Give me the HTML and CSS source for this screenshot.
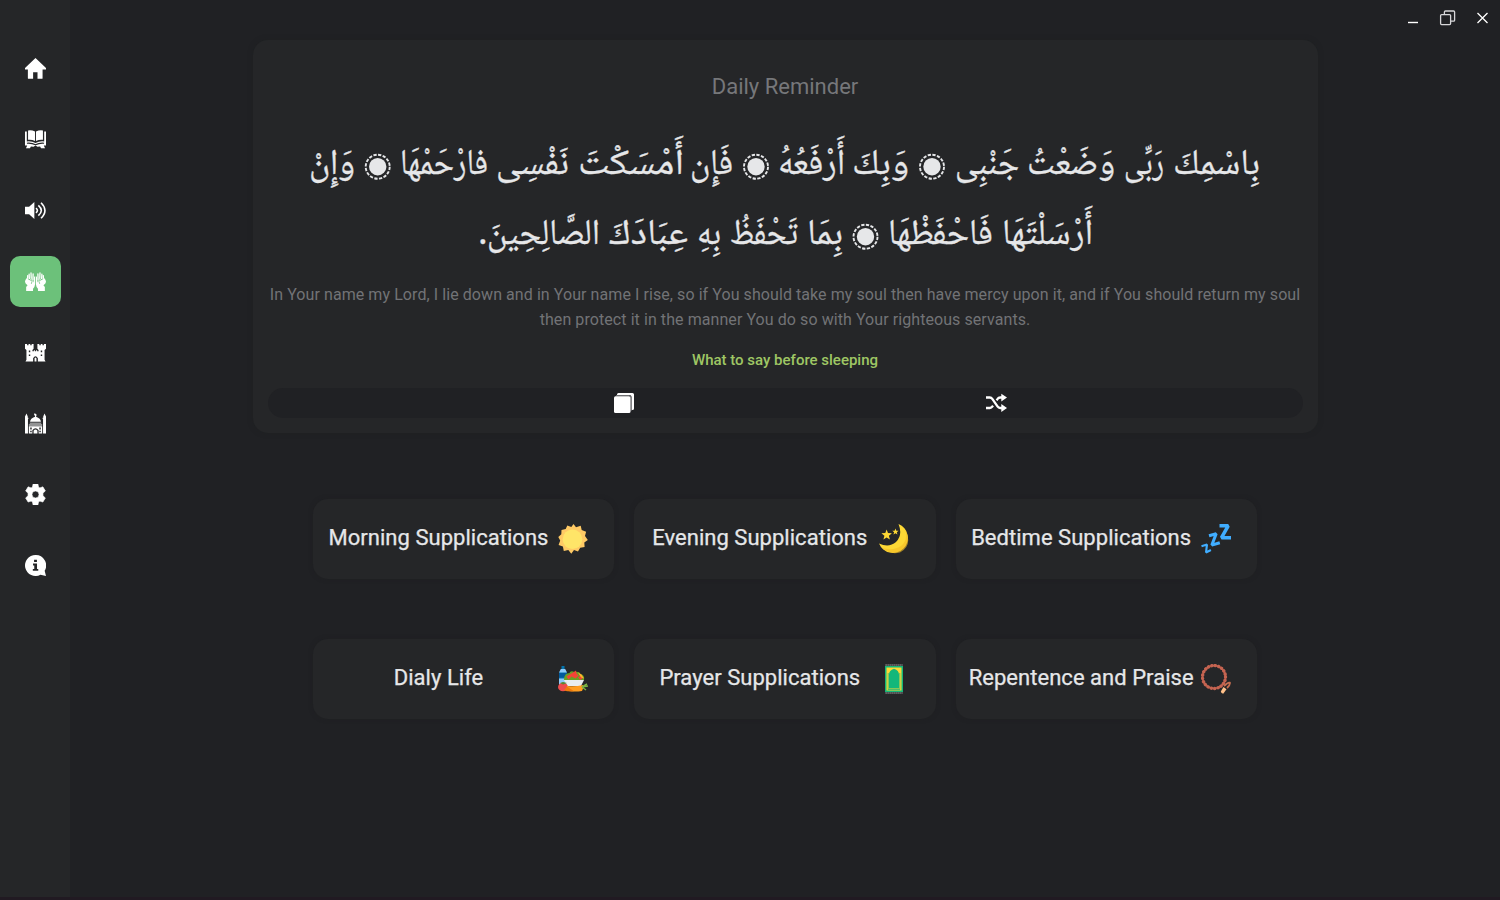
FILE: index.html
```html
<!DOCTYPE html>
<html lang="en">
<head>
<meta charset="utf-8">
<title>Supplications</title>
<link rel="stylesheet" href="styles.css">
</head>
<body>
<div class="app">
  <nav class="sidebar">
    <a class="nav"><svg viewBox="0 0 22 22"><path d="M11 0 0 10.400V12h3v9.200q0 .6.6.6H8.500V15h4.600v6.800h4.700q.6 0 .6-.6V12H22v-1.600z"/></svg></a>
    <a class="nav"><svg viewBox="0 0 22 22"><path d="M3.200 1.500Q7 .8 10.500 2.600V12.500Q7 10.800 3.200 11.300zM18.800 1.500Q15 .8 11.500 2.600v9.900q3.600-1.700 7.300-1.200zM0 2.500h1.900V13q5.100-.6 9.100 1.700 4-2.300 9.100-1.700V2.500H22v14.800h-2.300l1.300 2.900h-4.200l-1-1.800-2.800.2-2-1.400-2 1.400-2.800-.2-1 1.800H1l1.300-2.900H0z"/><path d="M2 14.900q5-.5 9 1.600 4-2.100 9-1.600" fill="none" stroke="#252628" stroke-width="1.200"/></svg></a>
    <a class="nav"><svg viewBox="0 0 22 22"><path d="M0 7h4.300L9.800 2.200V19.800L4.300 15H0z"/><g fill="none" stroke="#fff" stroke-width="1.700"><path d="M11.500 8.600q3 2.400 0 4.800M14 5.600q6.200 5.400 0 10.800M16.800 2.900q8.200 8 0 16.200"/></g></svg></a>
    <a class="nav active"><svg viewBox="0 0 22 22"><g id="hand"><path d="M10.600 5.600V14q-.3 3-2.200 4.500V21H1.200v-4.300l1.500-1.700Q0 13 0 11.200c0-1.500 1.200-2.900 2.500-5 L5 9.500l1.500-2L7.500 9l1.300 3 .7-6z"/><path d="M2.800 8.500V4.800M4.600 7.800 4.300 3.300M6.500 7.500 6.300 2M8.300 9 8.500 3" fill="none" stroke="#fff" stroke-width="1.350" stroke-linecap="round"/><path d="M3 8.200q2.500.6 2.800 2M6.300 8.500q2 2 .3 5" fill="none" stroke="#6cc17a" stroke-width=".8"/></g><use href="#hand" transform="matrix(-1 0 0 1 22 0)"/></svg></a>
    <a class="nav"><svg viewBox="0 0 22 22"><path fill-rule="evenodd" d="M0 2h2.200v1.500h1.500V2h1.800v1.500H7V2h2v5L7.800 8.300v1.500h1.500V8.600h1.100v1.200h1.200V8.600h1.100v1.200h1.500V8.300L13 7V2h2v1.500h1.500V2h1.800v1.500h1.500V2H22v5l-1.500 1.300V18.500L21.500 20.500h-8V17q-2.500-4-5 0v3.500h-8l1-2V8.300L0 7zM4 9v1.700h1.500V9zM4 13v1.700h1.500V13zM16.500 9v1.700H18V9zM16.500 13v1.700H18V13zM10 20.500V17q1-1.500 2 0v3.500z"/></svg></a>
    <a class="nav"><svg viewBox="0 0 22 22"><path d="M1.600.6 2.900 3.600V5h.6v1.200h-.4V21.500H0V6.200-.400V3.600zM20.400.6 19.100 3.600V5h-.6v1.200h.4V21.500H22V3.600zM5.300 9.200Q5.500 5.800 10.500 4V3Q8.500 1.500 10.500 0q.2 1.300 1.500 1.300V3l-.5 1q5 1.800 5.200 5.200zM5 10.100h12v.9H5zM4 12h14v1H4z"/><path fill-rule="evenodd" d="M4 14h14v7.500h-3.700V18q-3.300-4-6.600 0v3.500H4zm1.500 1.300v2H7v-2zm9.500 0v2h1.500v-2zM5.500 18.700v1.500H7v-1.500zm9.500 0v1.500h1.500v-1.500zM9 21.500v-3q2-2.500 4 0v3z"/></svg></a>
    <a class="nav"><svg viewBox="0 0 22 22"><path fill-rule="evenodd" d="M8.500 0h5l.6 3.200 1.500.9L18.700 3l2.600 4.300-2.500 2.200v2.900l2.500 2.200-2.600 4.300-3.100-1-1.500.9-.6 3.200h-5l-.6-3.200-1.500-.9-3.100 1L.7 14.600l2.500-2.200V9.500L.7 7.300 3.300 3l3.100 1.100 1.500-.9zM11 7.300a3.700 3.700 0 1 0 0 7.400 3.700 3.700 0 0 0 0-7.400z" stroke="#fff" stroke-width=".7" stroke-linejoin="round"/></svg></a>
    <a class="nav"><svg viewBox="0 0 22 22"><path fill-rule="evenodd" d="M11 0a11 11 0 1 0 5.200 20.700l5.800 1.300-1.400-5.400A11 11 0 0 0 11 0zM9.500 5h3v2.400h-3zM8.400 9h4.200v5.600h1.300v2H8.200v-2h1.500v-3.600H8.400z"/></svg></a>
  </nav>
  <div class="main">
    <header class="titlebar">
      <svg class="winbuttons" viewBox="0 0 84 20"><path d="M2 13.500h10" stroke="#fff" stroke-width="1.400"/><g fill="none" stroke="#d7d7d9" stroke-width="1.300"><rect x="34.600" y="5.600" width="10" height="10" rx="1"/><path d="M38.400 5V3q0-1 1-1h8.200q1 0 1 1v8.200q0 1-1 1h-3"/></g><path d="m71.500 4 10 10m0-10-10 10" stroke="#fff" stroke-width="1.300"/></svg>
    </header>
    <section class="reminder">
      <h1>Daily Reminder</h1>
      <svg class="arabic" viewBox="0 0 1037 150" lang="ar">
        <defs><g id="mark"><circle r="8.700"/><circle r="12" fill="none" stroke="#e6e7e9" stroke-width="1.900" stroke-dasharray="3.300 1.412"/></g></defs>
        <g class="verse">
          <text x="906" y="54" textLength="87" lengthAdjust="spacingAndGlyphs">بِاسْمِكَ</text>
          <text x="857" y="54" textLength="40" lengthAdjust="spacingAndGlyphs">رَبِّى</text>
          <text x="760" y="54" textLength="88" lengthAdjust="spacingAndGlyphs">وَضَعْتُ</text>
          <text x="688" y="54" textLength="64" lengthAdjust="spacingAndGlyphs">جَنْبِى</text>
          <text x="585" y="54" textLength="57" lengthAdjust="spacingAndGlyphs">وَبِكَ</text>
          <text x="511" y="54" textLength="67" lengthAdjust="spacingAndGlyphs">أَرْفَعُهُ</text>
          <text x="423" y="54" textLength="43" lengthAdjust="spacingAndGlyphs">فَإِن</text>
          <text x="311" y="54" textLength="106" lengthAdjust="spacingAndGlyphs">أَمْسَكْتَ</text>
          <text x="229" y="54" textLength="73" lengthAdjust="spacingAndGlyphs">نَفْسِى</text>
          <text x="133" y="54" textLength="88" lengthAdjust="spacingAndGlyphs">فارْحَمْهَا</text>
          <text x="42" y="54" textLength="46" lengthAdjust="spacingAndGlyphs">وَإِنْ</text>
          <text x="735" y="124" textLength="91" lengthAdjust="spacingAndGlyphs">أَرْسَلْتَهَا</text>
          <text x="621" y="124" textLength="105" lengthAdjust="spacingAndGlyphs">فَاحْفَظْهَا</text>
          <text x="540" y="124" textLength="36" lengthAdjust="spacingAndGlyphs">بِمَا</text>
          <text x="463" y="124" textLength="68" lengthAdjust="spacingAndGlyphs">تَحْفَظُ</text>
          <text x="430" y="124" textLength="24" lengthAdjust="spacingAndGlyphs">بِهِ</text>
          <text x="342" y="124" textLength="79" lengthAdjust="spacingAndGlyphs">عِبَادَكَ</text>
          <text x="220" y="124" textLength="113" lengthAdjust="spacingAndGlyphs">الصَّالِحِينَ</text>
          <text x="211" y="124">.</text>
          <use href="#mark" x="665" y="46.700"/><use href="#mark" x="489" y="46.700"/><use href="#mark" x="110.700" y="46.700"/><use href="#mark" x="598.500" y="116.700"/>
        </g>
      </svg>
      <p class="translation">In Your name my Lord, I lie down and in Your name I rise, so if You should take my soul then have mercy upon it, and if You should return my soul<br>then protect it in the manner You do so with Your righteous servants.</p>
      <p class="topic">What to say before sleeping</p>
      <div class="actions">
        <svg width="20" height="20" viewBox="0 0 20 20"><path d="M3 2V1.500Q3 0 4.500 0H18.500Q20 0 20 1.500V15.500Q20 17 18.500 17H17.500V4Q17.500 2 15.500 2z" fill="#fff"/><path d="M2 2.600h13.500q1.500 0 1.500 1.500V18" fill="none" stroke="#77777a"/><rect y="3.300" width="16.500" height="16.700" rx="1.500" fill="#fff"/></svg>
        <svg width="21" height="20" viewBox="0 0 21 20"><path d="M0 4.500h3.800q1.600 0 2.500 1.300l5.200 7.600q1 1.600 2.700 1.600H16M0 15h3.800q1.600 0 2.500-1.300l.7-1M10.600 7.300l1-1.400q.9-1.400 2.600-1.400H16" fill="none" stroke="#fff" stroke-width="2.300"/><path d="M15.300.8 21 4.600l-5.700 4zM15.300 11l5.700 4-5.700 3.900z" fill="#fff"/></svg>
      </div>
    </section>
    <section class="grid">
      <a class="card"><span>Morning Supplications</span><svg viewBox="0 0 30 30"><path fill="#ffca65" d="m15.500 0 2.500 3.300 4.700-1.500 1 4.200 4.400 1.800-1.100 4.200 2.800 4-3.500 2.500.3 4.500-4.400.8-2.200 3.700-4-1.500-2.700 3.700-3-3.700-4.500 1-.9-4.500-4.300-1.500 1.600-4.500L.3 13l3-2.800L3.500 6l4.200-1 1.600-3.500 4 1.400z"/><circle cx="14.500" cy="15.300" r="9.800" fill="#ffe568"/></svg></a>
      <a class="card"><span>Evening Supplications</span><svg viewBox="0 0 30 30"><path fill="#fdd835" d="M19.500 0A15 15 0 1 1 0 19.500Q10 24 17 18 24 11 19.500 0z"/><path fill="#f4bc24" d="M26.500 6q2.500 11-4.500 16T3 24q8 7 18 4.500 13-7 5.500-22.500z" opacity=".6"/><path fill="#fdd835" d="m7.600 5.500 1.400 3.500 3.900.3-3 2.400 1 3.900-3.300-2.100-3.200 2.100 1-3.900-3-2.400 3.900-.3zM16.500 4.500l.8 2.200 2.300.1-1.800 1.400.6 2.300-1.900-1.300-2 1.300.6-2.300-1.800-1.400 2.300-.1z"/></svg></a>
      <a class="card"><span>Bedtime Supplications</span><svg viewBox="0 0 30 30"><g fill="none" stroke="#40adff" stroke-linejoin="bevel"><path stroke-width="3.500" d="M18.500 1.800h8.700L20.500 13.700H30"/><path stroke-width="3" d="m8 11.800 7.200-2-4.400 11.300 8-2.300"/><path stroke-width="2.100" d="m.5 22.300 5.500-1.800-1 8 4.900-2.500"/></g></svg></a>
      <a class="card"><span>Dialy Life</span><svg viewBox="0 0 30 30"><path fill="#0474ad" d="M3.500 2h3v3L9 9v12H1V9l2.500-4z"/><path fill="#90caf9" d="M2.800 5h4.400L9 8.500H1zM1 14.500h8V21H1z"/><path fill="#03599c" d="M1 9h8v4.500H1z"/><path fill="#6a9f24" d="M6 16q0-7 5.500-7 1-3 5-1 5-1 6 2 4.500 1 3.500 6z"/><path fill="#f44336" d="m15 8.500 3-2 .5 3 2 2-3 3-4-2-3 3-2-3zM20 13l3-1 2 2-3 2z"/><path fill="#ffb32c" d="m20 8.500 3.500 2 2.500 4-3-1z"/><path fill="#e9edef" d="M6 16h20l-3 6H9z"/><ellipse cx="5" cy="23" rx="5" ry="4.300" fill="#ee4d4d"/><path fill="#558b2f" d="m2 19 3-1 4 1-4 1.500z"/><path fill="#ff9d20" d="M9 22q8 1 16-1 1 3-1 6-7 1-14 0-2-2-1-5z"/><path fill="#ef7a0c" d="m9 22.500 7 4.800H9l-3-1z"/><path d="m24 23 5-3m-5 3 6-1m-6 1 4 3" stroke="#7cb342" stroke-width="1.500"/></svg></a>
      <a class="card"><span>Prayer Supplications</span><svg viewBox="0 0 30 30"><path d="M6.500 1h17M6.500 29h17" stroke="#777" stroke-width="2" stroke-dasharray="1.200 .8"/><path fill="#13b77a" d="M6 2h18v26H6z"/><path fill="#fdd835" d="M7.500 3.500h15v23h-15z"/><path fill="#13b77a" d="M8.800 25.500v-16.500h.7v16.500zM20.500 25.500V9h.7v16.500zM8.800 25h12.400v.7H8.800zM10 24.500V10.500Q10 6.500 15 4.700q5 1.800 5 5.800v14z"/></svg></a>
      <a class="card"><span>Repentence and Praise</span><svg viewBox="0 0 30 30"><circle cx="13" cy="13" r="11.500" fill="none" stroke="#8d4339" stroke-width="2"/><circle cx="13" cy="13" r="11.500" fill="none" stroke="#c56451" stroke-width="3.400" stroke-linecap="round" stroke-dasharray=".1 3.340"/><path d="m23 22 3-2.500q3-1.500 3-.5 0 2-3 5" fill="none" stroke="#c66e50" stroke-width="1.800"/><path fill="#ffc18a" d="m22.500 23 3 2.300-3.300 4.500q-2-.3-2.400-2.300z"/></svg></a>
    </section>
  </div>
</div>
</body>
</html>
```
FILE: styles.css
```css
* { box-sizing: border-box; }
body { margin: 0; background: #202124; color: #e6e7e9; font-family: Roboto, sans-serif; }
.app { display: flex; height: 900px; overflow: hidden; border-bottom: 3px solid #211a22; }
.sidebar { width: 70px; flex: none; background: #252628; padding: 43px 9px 0 10px; display: flex; flex-direction: column; gap: 20px; }
.nav { width: 51px; height: 51px; flex: none; border-radius: 10px; display: grid; place-items: center; }
.nav svg { width: 21px; height: 21px; fill: #fff; }
.active { background: #6cc17a; }
.main { flex: 1; min-width: 0; }
.titlebar { height: 40px; display: flex; justify-content: flex-end; padding: 9px 10.500px 0 0; }
.winbuttons { width: 84px; height: 20px; }
.reminder { width: 1065px; height: 393px; margin-left: 183px; padding: 33px 14px 15px; background: #252628; border-radius: 15px; box-shadow: 0 0 5px rgba(30, 31, 32, .5); text-align: center; display: flex; flex-direction: column; }
h1 { margin: 0 1px 0 0; font-size: 22px; line-height: 27px; font-weight: 400; color: #76777a; }
.arabic { width: 1037px; height: 150px; margin-top: 20px; flex: none; overflow: visible; }
.verse { fill: #e6e7e9; }
.verse text { font-family: "Noto Naskh Arabic", Amiri, "DejaVu Sans", sans-serif; font-size: 36px; stroke: #e6e7e9; stroke-width: .35px; }
.translation { margin: 12px 1px 0 0; font-size: 16px; line-height: 25px; letter-spacing: .073px; color: #727376; white-space: nowrap; }
.topic { margin: 18px 1px 0 0; font-size: 15px; line-height: 21px; font-weight: 500; color: #9fc664; }
.actions { width: 1035px; height: 30px; margin: 17px 0 0 1px; padding-left: 346px; gap: 352px; border-radius: 15px; background: #202124; display: flex; align-items: center; }
.grid { display: grid; grid-template-columns: repeat(3, 301.330px); gap: 60px 20px; margin: 66px 0 0 243px; }
.card { height: 80px; border-radius: 15px; background: #252628; box-shadow: 0 0 4px rgba(29, 30, 31, .5); padding-left: 10px; display: flex; align-items: center; }
.card span { width: 231px; margin-right: 4px; text-align: center; white-space: nowrap; font-size: 22px; line-height: 28px; letter-spacing: .03px; padding-bottom: 3px; -webkit-text-stroke: .25px #e6e7e9; }
.card svg { width: 30px; height: 30px; }
```
